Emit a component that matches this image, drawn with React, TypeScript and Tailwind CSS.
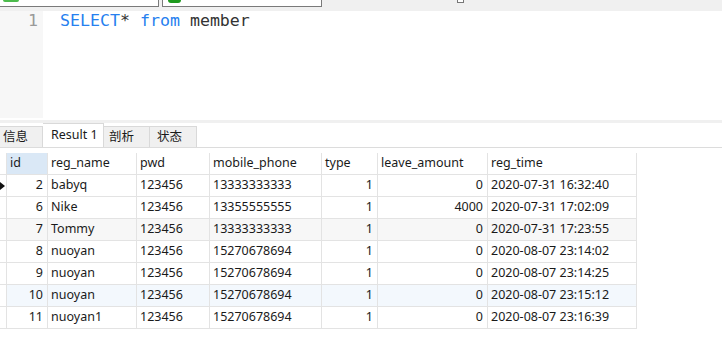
import React from "react";

const cols = [
  { key: "id", label: "id", w: "w-[41px]", right: true },
  { key: "name", label: "reg_name", w: "w-[89px]" },
  { key: "pwd", label: "pwd", w: "w-[73px]" },
  { key: "phone", label: "mobile_phone", w: "w-[112px]" },
  { key: "type", label: "type", w: "w-[56px]", right: true },
  { key: "amount", label: "leave_amount", w: "w-[110px]", right: true },
  { key: "time", label: "reg_time", w: "w-[149px]" },
];

const rows = [
  { id: "2", name: "babyq", pwd: "123456", phone: "13333333333", type: "1", amount: "0", time: "2020-07-31 16:32:40" },
  { id: "6", name: "Nike", pwd: "123456", phone: "13355555555", type: "1", amount: "4000", time: "2020-07-31 17:02:09" },
  { id: "7", name: "Tommy", pwd: "123456", phone: "13333333333", type: "1", amount: "0", time: "2020-07-31 17:23:55" },
  { id: "8", name: "nuoyan", pwd: "123456", phone: "15270678694", type: "1", amount: "0", time: "2020-08-07 23:14:02" },
  { id: "9", name: "nuoyan", pwd: "123456", phone: "15270678694", type: "1", amount: "0", time: "2020-08-07 23:14:25" },
  { id: "10", name: "nuoyan", pwd: "123456", phone: "15270678694", type: "1", amount: "0", time: "2020-08-07 23:15:12" },
  { id: "11", name: "nuoyan1", pwd: "123456", phone: "15270678694", type: "1", amount: "0", time: "2020-08-07 23:16:39" },
];

const rowBg = ["bg-white", "bg-white", "bg-[#f7f7f7]", "bg-white", "bg-white", "bg-[#f3f8fd]", "bg-white"];

const tabs = [
  { label: "信息", w: "w-[43px] pl-[3px]" },
  { label: "Result 1", w: "w-[61px] pl-[8px]", active: true },
  { label: "剖析", w: "w-[46px] pl-[5px]" },
  { label: "状态", w: "w-[47px] pl-[7px]" },
];

export default function App() {
  return (
    <div className="w-[722px] h-[343px] bg-white overflow-hidden flex flex-col font-['Noto_Sans','Noto_Sans_CJK_SC',sans-serif] text-[12.5px] text-[#1a1a1a]">
      {/* query tabs strip (cut off at top) */}
      <div className="h-[11px] shrink-0 bg-[#f0f0f0] flex items-start">
        <div className="ml-[-1px] w-[160px] h-[7px] border border-t-0 border-[#7a7a7a] bg-white">
          <div className="ml-[3px] w-[16px] h-[2px] rounded-b-[2px] bg-[#4cbb4c]" />
        </div>
        <div className="ml-[3px] w-[160px] h-[7px] border border-t-0 border-[#7a7a7a] bg-white">
          <div className="ml-[5px] w-[13px] h-[3px] rounded-b-full bg-[#1d9a1d]" />
        </div>
        <div className="ml-[135px] w-[7px] h-[3px] border border-t-0 border-[#777] bg-white" />
      </div>

      {/* editor */}
      <div className="h-[107px] shrink-0 flex font-['DejaVu_Sans_Mono',monospace] text-[16.6px] leading-[20px]">
        <div className="w-[43px] bg-[#f7f7f7] text-right pr-[5px] text-[#9a9a9a]">1</div>
        <div className="pl-[17px] whitespace-pre text-[#333]">
          <span className="text-[#2680ef]">SELECT</span>* <span className="text-[#2680ef]">from</span> member
        </div>
      </div>

      <div className="h-[2px] shrink-0" />
      <div className="h-[3px] shrink-0 bg-[#f0f0f0]" />

      {/* result tabs */}
      <div className="h-[25px] shrink-0 flex items-end border-b border-[#dcdcdc]">
        {tabs.map((t) => (
          <div
            key={t.label}
            className={`${t.w} flex items-center border-r border-t border-[#d9d9d9] ${
              t.active ? "h-[24px] bg-white" : "h-[21px] bg-[#f0f0f0]"
            }`}
          >
            {t.label}
          </div>
        ))}
      </div>

      <div className="h-[5px] shrink-0" />

      {/* grid */}
      <div className="flex flex-col w-[637px]">
        <div className="flex h-[22px]">
          <div className="w-[7px] border-r border-b border-[#e3e3e3]" />
          {cols.map((c, i) => (
            <div
              key={c.key}
              className={`${c.w} h-full flex items-center px-[3px] border-r border-b border-[#e3e3e3] ${
                i === 0 ? "bg-[#dae8f6]" : "bg-white"
              }`}
            >
              {c.label}
            </div>
          ))}
        </div>
        {rows.map((r, ri) => (
          <div key={r.id} className={`flex h-[22px] ${rowBg[ri]}`}>
            <div className="w-[7px] bg-white flex items-center border-r border-b border-[#e3e3e3]">
              {ri === 0 && (
                <svg width="5" height="8" viewBox="0 0 5 8">
                  <path d="M0 0 L5 4 L0 8 Z" fill="#111" />
                </svg>
              )}
            </div>
            {cols.map((c) => (
              <div
                key={c.key}
                className={`${c.w} h-full flex items-center border-r border-b border-[#e3e3e3] ${
                  c.right ? "justify-end pr-[4px]" : "pl-[3px]"
                }`}
              >
                {r[c.key as keyof typeof r]}
              </div>
            ))}
          </div>
        ))}
      </div>
    </div>
  );
}
